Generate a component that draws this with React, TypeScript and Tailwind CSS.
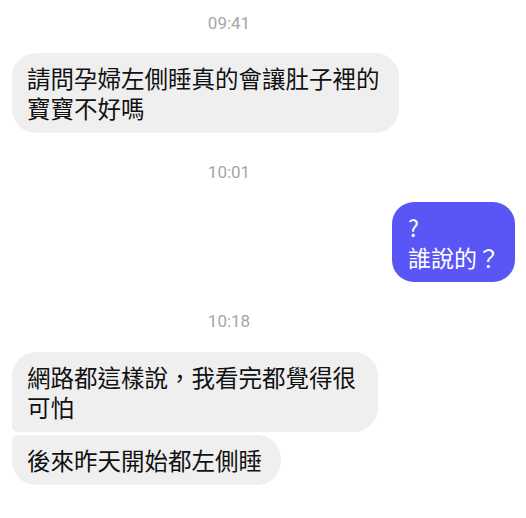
const cjk = "font-['Noto_Sans_CJK_TC','Noto_Sans',sans-serif]"

function Stamp({ time, className = '' }: { time: string; className?: string }) {
    return (
        <div className={`w-[458px] text-center text-[17px] leading-5 text-[#a6a6a6] font-['Roboto',sans-serif] ${className}`}>
            {time}
        </div>
    )
}

function Incoming({ children, className = '' }: { children: React.ReactNode; className?: string }) {
    return (
        <div className="flex pl-[12px]">
            <div className={`bg-[#efefef] text-[#111] text-[23.5px] leading-[30px] pl-[15px] py-[10px] ${cjk} ${className}`}>
                {children}
            </div>
        </div>
    )
}

export default function App() {
    return (
        <div className="w-[526px] h-[518px] bg-white flex flex-col pt-[13px]">
            <Stamp time="09:41" />

            <div className="mt-[20px]">
                <Incoming className="rounded-[24px] w-[387px]">
                    請問孕婦左側睡真的會讓肚子裡的寶寶不好嗎
                </Incoming>
            </div>

            <Stamp time="10:01" className="mt-[29px]" />

            <div className="mt-[20px] flex justify-end pr-[11px]">
                <div className={`w-[123px] bg-[#5a55f5] text-white text-[23px] leading-[30px] pl-[16px] py-[10px] rounded-[22px] ${cjk}`}>
                    <p className="h-[30px]">?</p>
                    <p className="h-[30px]">誰說的？</p>
                </div>
            </div>

            <Stamp time="10:18" className="mt-[29px]" />

            <div className="mt-[21px] flex flex-col gap-[3px]">
                <Incoming className="rounded-[24px] rounded-bl-[6px] w-[366px]">
                    網路都這樣說，我看完都覺得很可怕
                </Incoming>
                <Incoming className="rounded-[24px] rounded-tl-[6px] pr-[19px]">
                    後來昨天開始都左側睡
                </Incoming>
            </div>
        </div>
    )
}
